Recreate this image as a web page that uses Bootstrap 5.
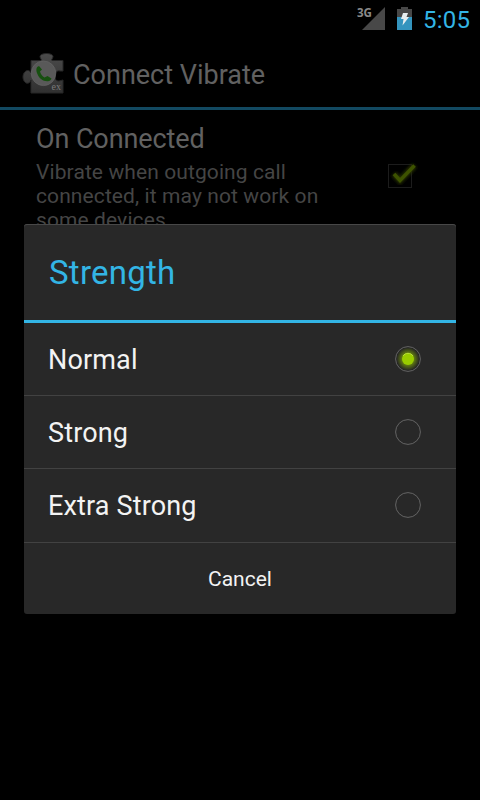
<!DOCTYPE html>
<html lang="en">
<head>
<meta charset="utf-8">
<meta name="viewport" content="width=device-width, initial-scale=1">
<title>Connect Vibrate</title>
<link href="https://cdn.jsdelivr.net/npm/bootstrap@5.3.0/dist/css/bootstrap.min.css" rel="stylesheet">
<style>
body{background:#000;font-family:Roboto,"Liberation Sans",sans-serif;color:#f3f3f3;height:800px;overflow:hidden}
.screen{width:480px;height:800px}
.statusbar{height:38px;padding:0 10px 0 0}
.clock{font-size:24px;line-height:36px;padding-top:2px;color:#33b5e5;margin-left:6px;width:47px;white-space:nowrap;letter-spacing:.2px}
.appbar{height:72px;border-bottom:3px solid #124961;padding:2px 0 0 22px}
.apptitle{font-size:27px;line-height:36px;color:#616161;margin-left:9px;padding-top:2px}
.pref{padding:11px 36px 0}
.pref-title{font-size:27px;line-height:36px;color:#616161;letter-spacing:-.1px}
.pref-text{font-size:21px;line-height:24px;color:#454545;width:300px;margin-top:3px;letter-spacing:.1px}
.check{margin:39px 24px 0 0}
.dialog-layer{inset:0;padding:224px 24px 0}
.dialog{height:390px;background:#282828;border-radius:3px;box-shadow:inset 0 1px 0 #484848}
.dialog-title{height:99px;padding:0 25px;border-bottom:3px solid #33b5e5;color:#33b5e5;font-size:33px;line-height:97px;letter-spacing:.25px}
.choice{height:73px;padding:0 35px 0 24px;border-bottom:1px solid #424242;font-size:27px;line-height:70px;background:none;color:#f3f3f3;letter-spacing:.15px}
.choice span{padding-top:2px}
.choice:last-child{height:74px;padding-bottom:1px}
.cancel{height:71px;font-size:21px;line-height:70px;padding:1px 0 0;color:#f3f3f3}
</style>
</head>
<body>
<div class="screen position-relative">
  <header class="statusbar d-flex align-items-center justify-content-end">
    <svg width="60" height="38" viewBox="0 0 60 38">
      <text x="0" y="17" font-size="12.500" font-weight="700" fill="#8a8a8a" textLength="15" lengthAdjust="spacingAndGlyphs" font-family="Open Sans, sans-serif">3G</text>
      <path d="M5 30 28 7v23z" fill="#484848"/>
      <path d="M40 9h4V7h7v2h4v8H40z" fill="#484848"/>
      <path d="M40 17h15v13H40z" fill="#3494be"/>
      <path d="m46 13h5l-1.500 4h2.500l-6.500 8.500 1-6.500H44z" fill="#e8eef0"/>
    </svg>
    <span class="clock">5:05</span>
  </header>
  <nav class="appbar d-flex align-items-center">
    <svg width="42" height="45" viewBox="0 0 42 45">
      <defs><linearGradient id="pz" x2="0" y2="1"><stop stop-color="#4b4b4b"/><stop offset="1" stop-color="#303030"/></linearGradient></defs>
      <path d="M9 9.500h10c1-1-1-2-1-4 0-4 13-4 13 0 0 2-2 3-1 4h11V20h-3c-6-2-7 11-1 10l4-1v13H9V29c-2 6-8 3-8-3s6-9 8-4z" fill="url(#pz)" stroke="#262626"/>
      <circle cx="21.500" cy="22.300" r="12.300" fill="#595959" stroke="#686868" stroke-width=".6"/>
      <path d="M17 15c-3 1-3 4-2 7 2 6 7 9 12 8 1 0 2-1 2.500-2.500L25.500 25l-3 1.500c-2-1-4-3.500-4.500-6l2-2z" fill="#175010"/>
      <text x="29.500" y="38.500" font-size="10" fill="#7a7a7a" font-family="Liberation Serif, serif">ex</text>
    </svg>
    <span class="apptitle">Connect Vibrate</span>
  </nav>
  <main class="pref d-flex justify-content-between align-items-start">
    <div><div class="pref-title">On Connected</div><div class="pref-text">Vibrate when outgoing call connected, it may not work on some devices</div></div>
    <svg class="check" width="34" height="34" viewBox="0 0 34 34">
      <defs><filter id="gl" x="-30%" y="-30%" width="160%" height="160%"><feGaussianBlur stdDeviation="1.800"/></filter></defs>
      <rect x="2.500" y="4.500" width="23" height="23" fill="none" stroke="#1c1c1c"/>
      <path d="m8 14 6 6.500L28.500 5.500" fill="none" stroke="#263300" stroke-width="6" filter="url(#gl)"/>
      <path d="m8 14 6 6.500L28.500 5.500" fill="none" stroke="#3d5200" stroke-width="3.600"/>
    </svg>
  </main>
  <div class="dialog-layer position-absolute">
    <section class="dialog" role="dialog" aria-label="Strength">
      <div class="dialog-title">Strength</div>
      <div>
        <div class="choice d-flex align-items-center justify-content-between"><span>Normal</span>
          <svg width="26" height="26" viewBox="0 0 26 26"><defs><radialGradient id="rg"><stop offset=".45" stop-color="#99cc00" stop-opacity=".6"/><stop offset="1" stop-color="#99cc00" stop-opacity="0"/></radialGradient></defs><circle cx="13" cy="13" r="12.400" fill="#242424" stroke="#646464"/><circle cx="13" cy="13" r="11.500" fill="url(#rg)"/><circle cx="13" cy="13" r="6" fill="#99cc00"/><path d="M8 10a6 6 0 0 1 10 0" fill="none" stroke="#b8e03c"/></svg>
        </div>
        <div class="choice d-flex align-items-center justify-content-between"><span>Strong</span>
          <svg width="26" height="26" viewBox="0 0 26 26"><circle cx="13" cy="13" r="12.400" fill="none" stroke="#646464"/></svg>
        </div>
        <div class="choice d-flex align-items-center justify-content-between"><span>Extra Strong</span>
          <svg width="26" height="26" viewBox="0 0 26 26"><circle cx="13" cy="13" r="12.400" fill="none" stroke="#646464"/></svg>
        </div>
      </div>
      <button class="cancel btn w-100 border-0" type="button">Cancel</button>
    </section>
  </div>
</div>
<script src="https://cdn.jsdelivr.net/npm/bootstrap@5.3.0/dist/js/bootstrap.bundle.min.js"></script>
</body>
</html>
